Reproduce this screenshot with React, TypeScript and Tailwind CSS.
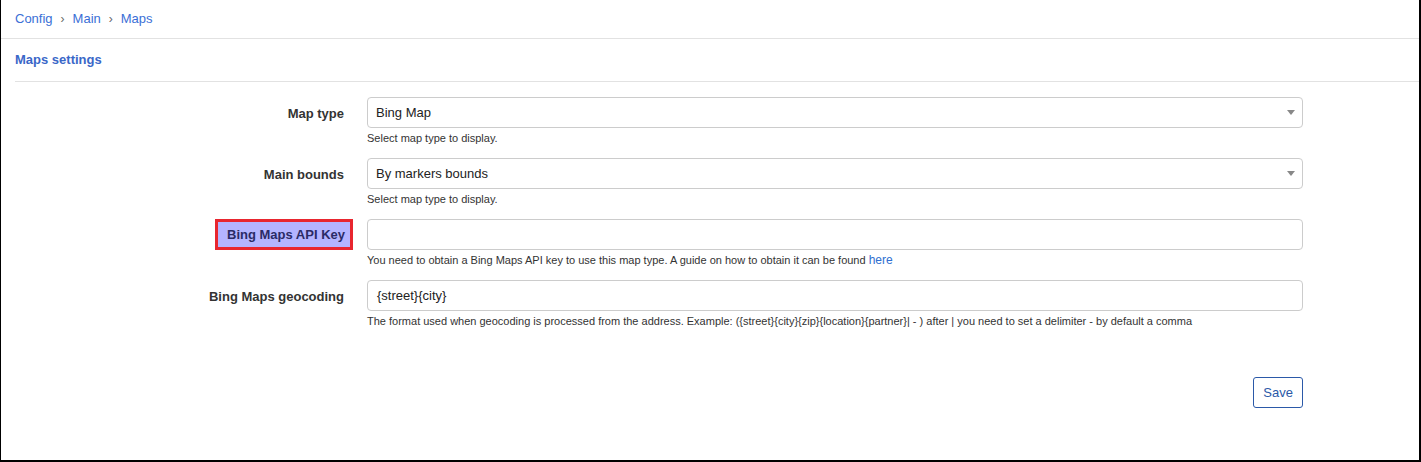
export default function App() {
  return (
    <div className="w-[1421px] h-[462px] bg-white border-l border-r-2 border-b-2 border-black font-['Liberation_Sans',Arial,sans-serif] text-[13px] text-[#333]">
      {/* breadcrumb */}
      <div className="h-[39px] flex items-center px-[14px] gap-[8px] border-b border-[#e2e2e2] text-[#3b6fd6]">
        <span>Config</span>
        <span className="text-[#666] text-[12px]">&#x203A;</span>
        <span>Main</span>
        <span className="text-[#666] text-[12px]">&#x203A;</span>
        <span>Maps</span>
      </div>

      {/* title */}
      <div className="ml-[14px] h-[43px] flex items-center border-b border-[#e2e2e2] font-bold text-[#3a67c8]">
        Maps settings
      </div>

      {/* form */}
      <div className="pt-[15px] flex flex-col gap-[13px]">
        <Row label="Map type" help="Select map type to display.">
          <Select value="Bing Map" />
        </Row>
        <Row label="Main bounds" help="Select map type to display.">
          <Select value="By markers bounds" />
        </Row>
        <Row
          label="Bing Maps API Key"
          highlight
          help={
            <>
              You need to obtain a Bing Maps API key to use this map type. A guide on how to obtain it can be found{" "}
              <span className="text-[#2f6fd0] text-[12px]">here</span>
            </>
          }
        >
          <div className="h-[31px] border border-[#ccc] rounded-[4px] bg-white" />
        </Row>
        <Row
          label="Bing Maps geocoding"
          help="The format used when geocoding is processed from the address. Example: ({street}{city}{zip}{location}{partner}| - ) after | you need to set a delimiter - by default a comma"
        >
          <div className="h-[31px] border border-[#ccc] rounded-[4px] bg-white flex items-center px-[9px] text-[#222]">
            {"{street}{city}"}
          </div>
        </Row>
      </div>

      <div className="w-[1302px] flex justify-end mt-[49px]">
        <button className="h-[31px] px-[9px] border border-[#2b59a8] rounded-[3px] text-[#2b59a8] text-[13px]">
          Save
        </button>
      </div>
    </div>
  );
}

function Row({
  label,
  help,
  highlight,
  children,
}: {
  label: string;
  help: React.ReactNode;
  highlight?: boolean;
  children: React.ReactNode;
}) {
  return (
    <div className="flex">
      <div className="w-[352px] flex justify-end items-start">
        {highlight ? (
          <div className="h-[31px] pl-[9px] pr-[5px] flex items-center bg-[#b4b4ff] border-[3px] border-[#e8262f] font-bold text-[#2b2b66]">
            {label}
          </div>
        ) : (
          <div className="pr-[9px] pt-[7px] font-bold text-[#333]">{label}</div>
        )}
      </div>
      <div className="ml-[14px] w-[936px]">
        {children}
        <div className="mt-[4px] text-[11px] leading-[13px] text-[#333]">{help}</div>
      </div>
    </div>
  );
}

function Select({ value }: { value: string }) {
  return (
    <div className="h-[31px] border border-[#ccc] rounded-[4px] bg-white flex items-center justify-between pl-[8px] pr-[7px] text-[#222]">
      <span>{value}</span>
      <span className="w-0 h-0 border-l-[4px] border-r-[4px] border-t-[5px] border-l-transparent border-r-transparent border-t-[#888]" />
    </div>
  );
}
